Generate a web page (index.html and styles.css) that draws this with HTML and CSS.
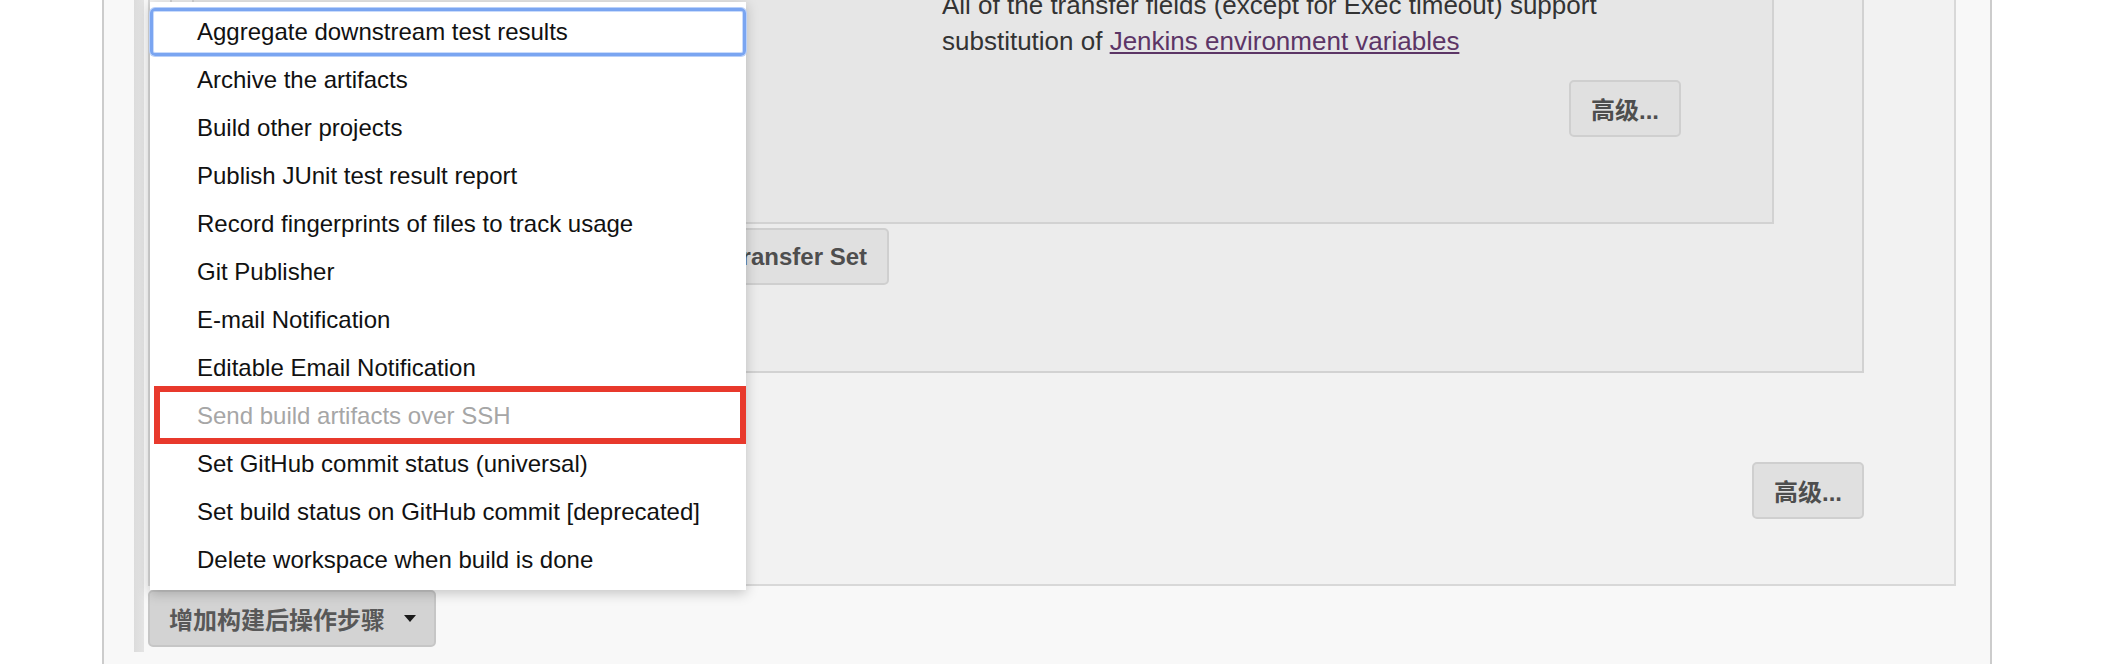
FILE: index.html
```html
<!DOCTYPE html>
<html lang="zh-CN">
<head>
<meta charset="utf-8">
<title>Post-build Actions</title>
<link rel="stylesheet" href="styles.css">
</head>
<body>
<div class="page">
  <div class="section">
    <div class="strip"></div>
    <div class="section-body">
      <div class="outer-panel">
        <div class="middle-panel">
          <div class="inner-panel">
            <p class="help">All of the transfer fields (except for Exec timeout) support substitution of <a href="#" class="env-link">Jenkins environment variables</a></p>
            <div class="adv-row"><button class="btn">高级...</button></div>
          </div>
          <div class="transfer-row"><button class="btn">Add Transfer Set</button></div>
        </div>
        <div class="adv-row outer-adv"><button class="btn">高级...</button></div>
      </div>
      <div class="add-row">
        <button class="btn btn-add">增加构建后操作步骤<span class="caret"></span></button>
      </div>
    </div>
  </div>
  <ul class="menu">
    <li class="menu-item focused">Aggregate downstream test results</li>
    <li class="menu-item">Archive the artifacts</li>
    <li class="menu-item">Build other projects</li>
    <li class="menu-item">Publish JUnit test result report</li>
    <li class="menu-item">Record fingerprints of files to track usage</li>
    <li class="menu-item">Git Publisher</li>
    <li class="menu-item">E-mail Notification</li>
    <li class="menu-item">Editable Email Notification</li>
    <li class="menu-item disabled">Send build artifacts over SSH</li>
    <li class="menu-item">Set GitHub commit status (universal)</li>
    <li class="menu-item">Set build status on GitHub commit [deprecated]</li>
    <li class="menu-item">Delete workspace when build is done</li>
    <li class="highlight-box"></li>
  </ul>
</div>
</body>
</html>
```

FILE: styles.css
```css
* {
  box-sizing: border-box;
}

html, body {
  margin: 0;
  padding: 0;
  background: #ffffff;
  height: 664px;
  overflow: hidden;
}

body {
  font-family: "Liberation Sans", "Noto Sans CJK SC", sans-serif;
  color: #333333;
}

.page {
  position: relative;
  margin-left: 102px;
  width: 1890px;
  height: 664px;
  background: #f8f8f8;
  border-left: 2px solid #cccccc;
  border-right: 2px solid #cccccc;
}

.section {
  display: flex;
  padding-left: 30px;
}

.strip {
  width: 10px;
  flex: none;
  background: linear-gradient(to right, #dcdcdc, #e4e4e4);
}

.section-body {
  flex: 1;
  padding-left: 4px;
  padding-right: 34px;
  padding-bottom: 5px;
}

.outer-panel {
  background: #f2f2f2;
  border: 2px solid #d8d8d8;
  border-top: none;
  padding: 0 90px 65px 20px;
}

.middle-panel {
  background: #ececec;
  border: 2px solid #d2d2d2;
  border-top: none;
  padding: 0 88px 86px 20px;
}

.inner-panel {
  background: #e6e6e6;
  border: 2px solid #d2d2d2;
  border-top: none;
  padding: 0 91px 85px 748px;
}

.help {
  margin: -13px 0 0 0;
  font-size: 26px;
  line-height: 36px;
  color: #333333;
}

.env-link {
  color: #5c3566;
  text-decoration: underline;
}

.adv-row {
  display: flex;
  justify-content: flex-end;
  margin-top: 21px;
}

.outer-adv {
  margin-top: 89px;
}

.transfer-row {
  display: flex;
  justify-content: flex-end;
  width: 697px;
  margin-top: 4px;
}

.btn {
  height: 57px;
  padding: 0 20px;
  font-family: "Liberation Sans", "Noto Sans CJK SC", sans-serif;
  font-size: 24px;
  font-weight: bold;
  color: #4e4e4e;
  background: #e0e0e0;
  border: 2px solid #cfcfcf;
  border-radius: 5px;
  display: inline-flex;
  align-items: center;
}

.add-row {
  margin-top: 4px;
}

.btn-add {
  padding: 0 18px 0 19px;
  background: #d3d3d3;
  border-color: #c6c6c6;
  color: #585858;
}

.caret {
  width: 0;
  height: 0;
  margin-left: 19px;
  border-left: 6px solid transparent;
  border-right: 6px solid transparent;
  border-top: 7px solid #1a1a1a;
}

.menu {
  position: absolute;
  left: 46px;
  top: 2px;
  width: 596px;
  margin: 0;
  padding: 6px 0 6px 0;
  list-style: none;
  background: #ffffff;
  box-shadow: 0 3px 12px rgba(0, 0, 0, 0.22);
}

.menu-item {
  height: 48px;
  padding-left: 47px;
  display: flex;
  align-items: center;
  font-size: 24px;
  color: #111111;
  white-space: nowrap;
}

.menu-item.focused {
  border: 3px solid #7aa5f1;
  border-radius: 5px;
  padding-left: 44px;
  box-shadow: 0 0 0 1px #b9d0f9, inset 0 0 0 1px #c9dbfb;
}

.menu-item.disabled {
  color: #a6a6a6;
}

.highlight-box {
  position: absolute;
  left: 4px;
  top: 384px;
  width: 592px;
  height: 58px;
  border: 6px solid #e8392c;
}
```
